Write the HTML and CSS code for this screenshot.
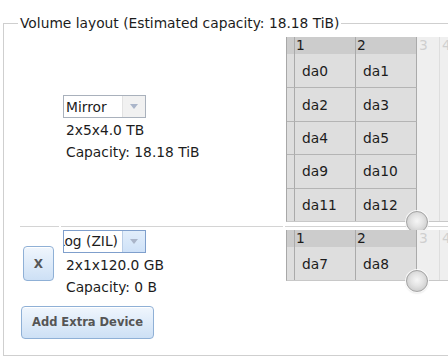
FILE: index.html
```html
<!DOCTYPE html>
<html>
<head>
<meta charset="utf-8">
<link rel="stylesheet" href="styles.css">
</head>
<body>
<fieldset class="vol">
  <legend>Volume layout (Estimated capacity: 18.18 TiB)</legend>

  <div class="group first">
    <div class="cell xcell"></div>
    <div class="cell info">
      <div class="sel">
        <div class="sel-text"><span>Mirror</span></div>
        <div class="sel-btn"><span class="tri"></span></div>
      </div>
      <div class="line">2x5x4.0 TB</div>
      <div class="line">Capacity: 18.18 TiB</div>
    </div>
    <div class="cell gcell">
      <div class="disks">
        <div class="h0"></div><div class="h">1</div><div class="h">2</div><div class="hf">3</div><div class="hf last">4</div>
        <div class="c0"></div><div class="c">da0</div><div class="c">da1</div><div class="cf"></div><div class="cf last"></div>
        <div class="c0 r"></div><div class="c r">da2</div><div class="c r">da3</div><div class="cf"></div><div class="cf last"></div>
        <div class="c0 r"></div><div class="c r">da4</div><div class="c r">da5</div><div class="cf"></div><div class="cf last"></div>
        <div class="c0 r"></div><div class="c r">da9</div><div class="c r">da10</div><div class="cf"></div><div class="cf last"></div>
        <div class="c0 r"></div><div class="c r">da11</div><div class="c r">da12</div><div class="cf"></div><div class="cf last"></div>
        <span class="knob"></span>
      </div>
    </div>
  </div>

  <div class="group second">
    <div class="cell xcell"><button class="btn xbtn">X</button></div>
    <div class="cell info">
      <div class="sel focus">
        <div class="sel-text"><span>Log (ZIL)</span></div>
        <div class="sel-btn"><span class="tri"></span></div>
      </div>
      <div class="line">2x1x120.0 GB</div>
      <div class="line">Capacity: 0 B</div>
    </div>
    <div class="cell gcell">
      <div class="disks">
        <div class="h0"></div><div class="h">1</div><div class="h">2</div><div class="hf">3</div><div class="hf last">4</div>
        <div class="c0"></div><div class="c">da7</div><div class="c">da8</div><div class="cf"></div><div class="cf last"></div>
        <span class="knob"></span>
      </div>
    </div>
  </div>

  <button class="btn add">Add Extra Device</button>
</fieldset>
</body>
</html>
```

FILE: styles.css
```css
html, body {
  margin: 0;
  overflow: hidden;
}
body {
  font-family: "DejaVu Sans", Verdana, sans-serif;
  font-size: 13.8px;
  color: #1c1c1c;
  background: #fff;
}
.vol {
  margin: 16px 0 0 3px;
  width: 480px;
  box-sizing: border-box;
  border: 1px solid #cfcfcf;
  padding: 7px 0 16px 16px;
  min-inline-size: 0;
}
.vol legend {
  padding: 0 2px;
  margin-left: -2px;
  line-height: 14px;
  font-size: 13.8px;
}
.group {
  display: grid;
  grid-template-columns: 39px 222px 1fr;
  column-gap: 2px;
}
.cell {
  display: flex;
  flex-direction: column;
  justify-content: center;
}
.first .cell {
  border-bottom: 1px solid #d4d4d4;
  padding-bottom: 4px;
}
.second .cell {
  padding-top: 3px;
}
.gcell {
  justify-content: flex-start;
}
.info {
  padding-left: 2px;
  align-items: flex-start;
}
.xcell {
  padding-left: 3px;
  align-items: flex-start;
}

/* select */
.sel {
  display: flex;
  width: 83px;
  height: 23px;
  box-sizing: border-box;
  border: 1px solid #a9b1bc;
  margin-bottom: 1px;
  background: #fff;
}
.sel-text {
  flex: 1;
  min-width: 0;
  overflow: hidden;
  display: flex;
  align-items: center;
  justify-content: flex-start;
  padding-left: 2px;
  white-space: nowrap;
}
.sel-btn {
  width: 22px;
  border-left: 1px solid #e2e2e2;
  background: #f1f1f1;
  display: flex;
  align-items: center;
  justify-content: center;
}
.tri {
  width: 0;
  height: 0;
  border-left: 4px solid transparent;
  border-right: 4px solid transparent;
  border-top: 5px solid #aab5c9;
}
.sel.focus {
  border-color: #7f9fcc;
}
.sel.focus .sel-text {
  justify-content: flex-end;
  padding-left: 0;
  padding-right: 4px;
}
.sel.focus .sel-btn {
  background: linear-gradient(#e2eefb, #cfe2f8);
  border-left-color: #b9cde6;
}
.line {
  line-height: 22px;
  padding-left: 3px;
  white-space: nowrap;
}

/* buttons */
.btn {
  font-family: "DejaVu Sans", Verdana, sans-serif;
  font-weight: bold;
  color: #555;
  border: 1px solid #8fb0d6;
  border-radius: 4px;
  background: linear-gradient(#f0f6fd, #cde0f5);
  box-shadow: inset 0 1px 0 #fff;
  padding: 0;
  cursor: pointer;
}
.xbtn {
  width: 31px;
  height: 35px;
  font-size: 12px;
}
.add {
  display: block;
  width: 133px;
  height: 33px;
  margin: 8px 0 0 1px;
  font-size: 11.5px;
}

/* disk grid */
.disks {
  position: relative;
  display: grid;
  grid-template-columns: 8px 61px 61px 23px 40px;
  grid-template-rows: 17px;
  grid-auto-rows: 33.4px;
  margin-left: 1px;
  border-left: 1px solid #a8a8a8;
  border-bottom: 1px solid #c8c8c8;
}
.disks > div {
  box-sizing: border-box;
}
.h0, .h {
  background: #cccccc;
  border-right: 1px solid #aaaaaa;
}
.h {
  padding-left: 1px;
  line-height: 17px;
}
.hf, .cf {
  background: #efefef;
  border-right: 1px solid #dedede;
  color: #cfcfcf;
}
.hf {
  padding-left: 2px;
  line-height: 17px;
}
.last {
  border-right: none;
}
.c0, .c {
  background: #dedede;
  border-right: 1px solid #aaaaaa;
}
.c {
  display: flex;
  align-items: center;
  padding-left: 7px;
}
.r {
  border-top: 1px solid #b4b4b4;
}
.knob {
  position: absolute;
  left: 119px;
  bottom: -12px;
  width: 22px;
  height: 22px;
  box-sizing: border-box;
  border-radius: 50%;
  border: 1px solid #a4a4a4;
  background: radial-gradient(circle at 50% 45%, #f6f6f6 0%, #e4e4e4 40%, #cbcbcb 80%, #b8b8b8 100%);
  box-shadow: 0 0 0 1px rgba(255,255,255,0.8), 0 1px 2px rgba(0,0,0,0.2);
}
```
